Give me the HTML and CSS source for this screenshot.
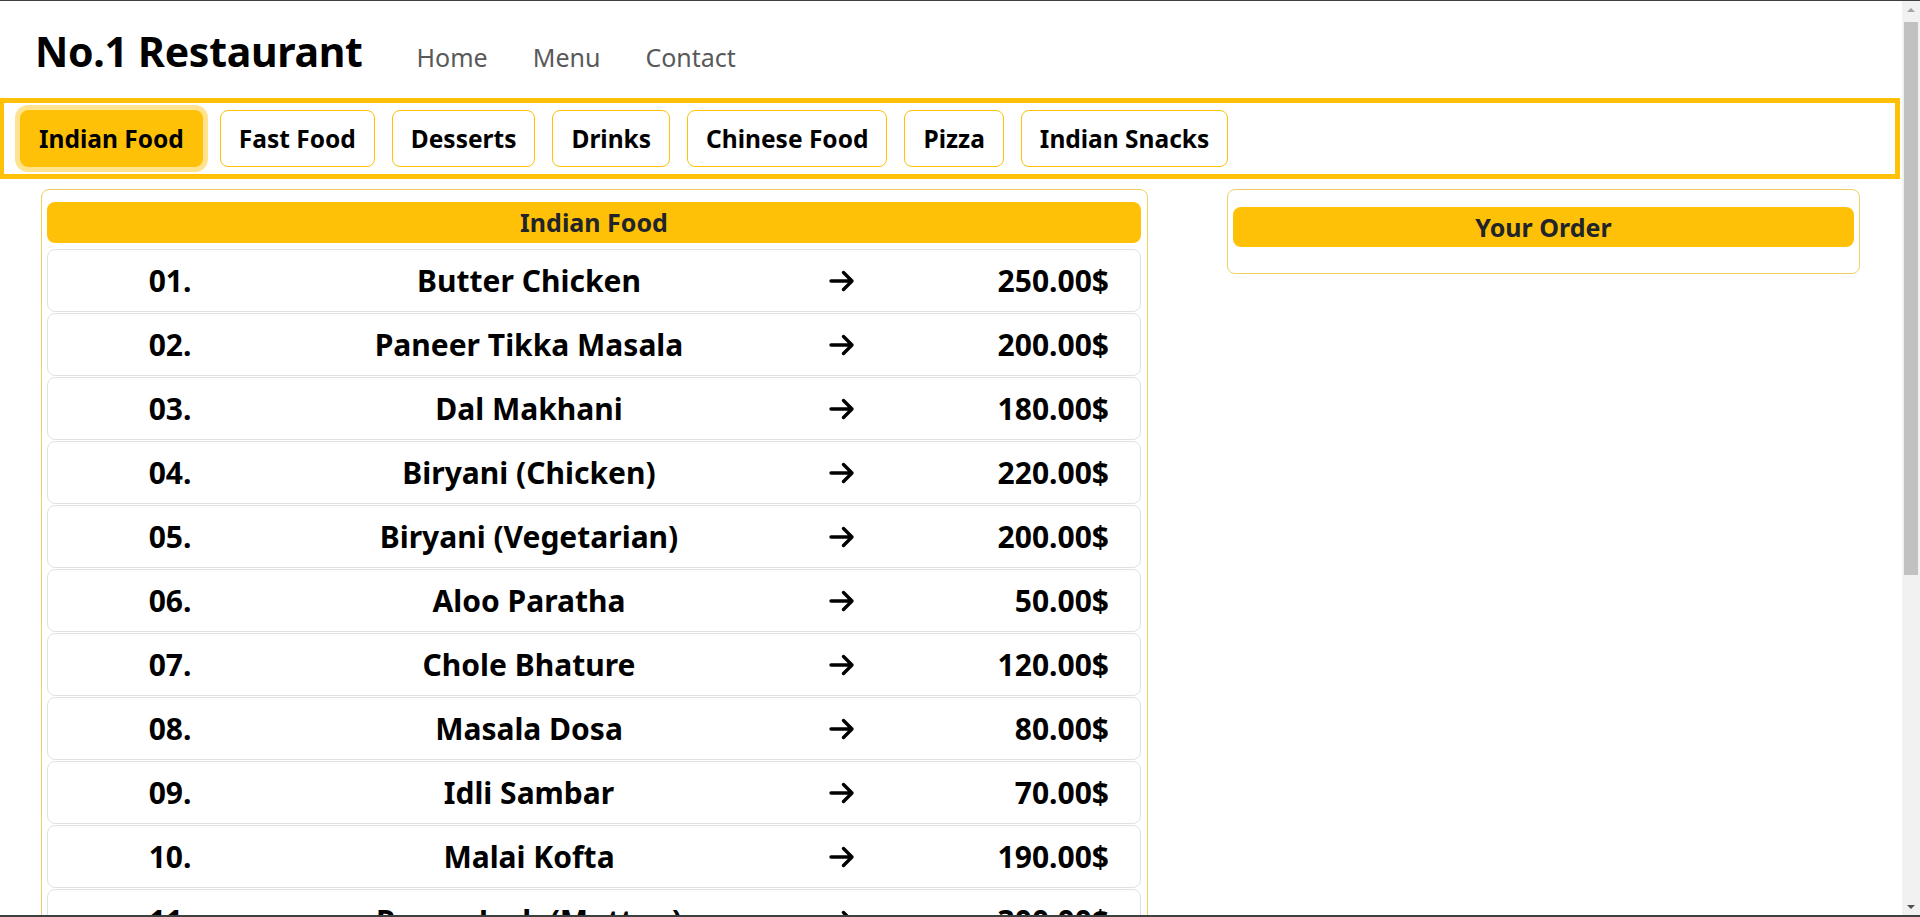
FILE: index.html
```
<!DOCTYPE html>
<html lang="en">
<head>
<meta charset="utf-8">
<title>No.1 Restaurant</title>
<link rel="stylesheet" href="styles.css">
</head>
<body>
<div class="frame">
  <div class="page">
    <header class="topbar">
      <h1 class="brand">No.1 Restaurant</h1>
      <nav class="links">
        <a href="#">Home</a>
        <a href="#">Menu</a>
        <a href="#">Contact</a>
      </nav>
    </header>

    <div class="cats">
      <button class="cat active">Indian Food</button>
      <button class="cat">Fast Food</button>
      <button class="cat">Desserts</button>
      <button class="cat">Drinks</button>
      <button class="cat">Chinese Food</button>
      <button class="cat">Pizza</button>
      <button class="cat">Indian Snacks</button>
    </div>

    <main class="content">
      <section class="menu-card">
        <div class="bar">Indian Food</div>
        <div class="item"><span class="num">01.</span><span class="name">Butter Chicken</span><span class="arrow"><svg viewBox="0 0 28 24" width="28" height="24"><path d="M3 12H24M15.5 3.5L24 12 15.5 20.5"/></svg></span><span class="price">250.00$</span></div>
        <div class="item"><span class="num">02.</span><span class="name">Paneer Tikka Masala</span><span class="arrow"><svg viewBox="0 0 28 24" width="28" height="24"><path d="M3 12H24M15.5 3.5L24 12 15.5 20.5"/></svg></span><span class="price">200.00$</span></div>
        <div class="item"><span class="num">03.</span><span class="name">Dal Makhani</span><span class="arrow"><svg viewBox="0 0 28 24" width="28" height="24"><path d="M3 12H24M15.5 3.5L24 12 15.5 20.5"/></svg></span><span class="price">180.00$</span></div>
        <div class="item"><span class="num">04.</span><span class="name">Biryani (Chicken)</span><span class="arrow"><svg viewBox="0 0 28 24" width="28" height="24"><path d="M3 12H24M15.5 3.5L24 12 15.5 20.5"/></svg></span><span class="price">220.00$</span></div>
        <div class="item"><span class="num">05.</span><span class="name">Biryani (Vegetarian)</span><span class="arrow"><svg viewBox="0 0 28 24" width="28" height="24"><path d="M3 12H24M15.5 3.5L24 12 15.5 20.5"/></svg></span><span class="price">200.00$</span></div>
        <div class="item"><span class="num">06.</span><span class="name">Aloo Paratha</span><span class="arrow"><svg viewBox="0 0 28 24" width="28" height="24"><path d="M3 12H24M15.5 3.5L24 12 15.5 20.5"/></svg></span><span class="price">50.00$</span></div>
        <div class="item"><span class="num">07.</span><span class="name">Chole Bhature</span><span class="arrow"><svg viewBox="0 0 28 24" width="28" height="24"><path d="M3 12H24M15.5 3.5L24 12 15.5 20.5"/></svg></span><span class="price">120.00$</span></div>
        <div class="item"><span class="num">08.</span><span class="name">Masala Dosa</span><span class="arrow"><svg viewBox="0 0 28 24" width="28" height="24"><path d="M3 12H24M15.5 3.5L24 12 15.5 20.5"/></svg></span><span class="price">80.00$</span></div>
        <div class="item"><span class="num">09.</span><span class="name">Idli Sambar</span><span class="arrow"><svg viewBox="0 0 28 24" width="28" height="24"><path d="M3 12H24M15.5 3.5L24 12 15.5 20.5"/></svg></span><span class="price">70.00$</span></div>
        <div class="item"><span class="num">10.</span><span class="name">Malai Kofta</span><span class="arrow"><svg viewBox="0 0 28 24" width="28" height="24"><path d="M3 12H24M15.5 3.5L24 12 15.5 20.5"/></svg></span><span class="price">190.00$</span></div>
        <div class="item"><span class="num">11.</span><span class="name">Rogan Josh (Mutton)</span><span class="arrow"><svg viewBox="0 0 28 24" width="28" height="24"><path d="M3 12H24M15.5 3.5L24 12 15.5 20.5"/></svg></span><span class="price">300.00$</span></div>
        <div class="item"><span class="num">12.</span><span class="name">Palak Paneer</span><span class="arrow"><svg viewBox="0 0 28 24" width="28" height="24"><path d="M3 12H24M15.5 3.5L24 12 15.5 20.5"/></svg></span><span class="price">180.00$</span></div>
        <div class="item"><span class="num">13.</span><span class="name">Tandoori Chicken</span><span class="arrow"><svg viewBox="0 0 28 24" width="28" height="24"><path d="M3 12H24M15.5 3.5L24 12 15.5 20.5"/></svg></span><span class="price">240.00$</span></div>
        <div class="item"><span class="num">14.</span><span class="name">Samosa</span><span class="arrow"><svg viewBox="0 0 28 24" width="28" height="24"><path d="M3 12H24M15.5 3.5L24 12 15.5 20.5"/></svg></span><span class="price">30.00$</span></div>
      </section>

      <aside class="order-card">
        <div class="bar">Your Order</div>
      </aside>
    </main>
  </div>

  <div class="scrollbar">
    <div class="sb-btn sb-up"></div>
    <div class="sb-track"><div class="sb-thumb"></div></div>
    <div class="sb-btn sb-down"></div>
  </div>
</div>
</body>
</html>
```
FILE: styles.css
```
* { box-sizing: border-box; }

html, body {
  margin: 0;
  padding: 0;
  background: #ffffff;
  overflow: hidden;
}

body {
  font-family: "Noto Sans", "Open Sans", "Liberation Sans", sans-serif;
  color: #000;
}

.frame {
  display: flex;
  height: 917px;
  border-top: 1px solid #3f3f3f;
  border-bottom: 2px solid #3f3f3f;
}

.page {
  flex: 1;
  overflow: hidden;
}

/* header */
.topbar {
  display: flex;
  align-items: baseline;
  height: 97px;
  padding: 21px 35px 0;
}

.brand {
  margin: 0 54px 0 0;
  font-size: 41px;
  line-height: 58px;
  font-weight: 700;
  letter-spacing: -0.3px;
}

.links {
  display: flex;
  gap: 45px;
}

.links a {
  color: #595959;
  text-decoration: none;
  font-size: 25px;
}

/* categories */
.cats {
  display: flex;
  gap: 17px;
  margin-right: 2px;
  padding: 7px 16px;
  border: 5px solid #ffc107;
  border-left-width: 4px;
}

.cat {
  font-family: inherit;
  font-size: 24.5px;
  font-weight: 700;
  line-height: 37px;
  padding: 9px 18px;
  border: 1px solid #ffc107;
  border-radius: 8px;
  background: #fff;
  color: #000;
}

.cat.active {
  background: #ffc107;
  box-shadow: 0 0 0 5px rgba(255, 193, 7, 0.45);
}

/* content */
.content {
  display: flex;
  align-items: flex-start;
  gap: 79px;
  padding: 10px 0 0 41px;
}

.menu-card {
  width: 1107px;
  border: 1px solid #f2cf62;
  border-radius: 8px;
  padding: 12px 6px 5px 5px;
}

.order-card {
  width: 633px;
  border: 1px solid #f2cf62;
  border-radius: 8px;
  padding: 17px 5px 26px;
}

.bar {
  background: #ffc107;
  border-radius: 8px;
  text-align: center;
  font-size: 25px;
  font-weight: 700;
  line-height: 41px;
  color: #212529;
}

.menu-card .bar {
  margin-bottom: 6px;
}

.order-card .bar {
  line-height: 40px;
}

.item {
  display: grid;
  grid-template-columns: 244px 474px 152px 1fr;
  align-items: center;
  height: 63px;
  margin-bottom: 1px;
  border: 1px solid #dee2e6;
  border-radius: 8px;
  font-size: 30px;
  font-weight: 700;
}

.num, .name, .arrow { text-align: center; }

.arrow {
  display: flex;
  justify-content: center;
}

.arrow svg {
  fill: none;
  stroke: #000;
  stroke-width: 3.4;
  stroke-linecap: round;
  stroke-linejoin: round;
}

.price {
  text-align: right;
  padding-right: 31px;
}

/* fake window scrollbar */
.scrollbar {
  width: 18px;
  display: flex;
  flex-direction: column;
  background: #f1f1f1;
}

.sb-btn {
  height: 17px;
  display: flex;
  align-items: center;
  justify-content: center;
}

.sb-up::before {
  content: "";
  border-left: 4px solid transparent;
  border-right: 4px solid transparent;
  border-bottom: 4px solid #a3a3a3;
}

.sb-down::before {
  content: "";
  border-left: 4px solid transparent;
  border-right: 4px solid transparent;
  border-top: 4px solid #505050;
}

.sb-track {
  flex: 1;
  padding: 4px 2px 0;
}

.sb-thumb {
  height: 553px;
  background: #c1c1c1;
}
```
